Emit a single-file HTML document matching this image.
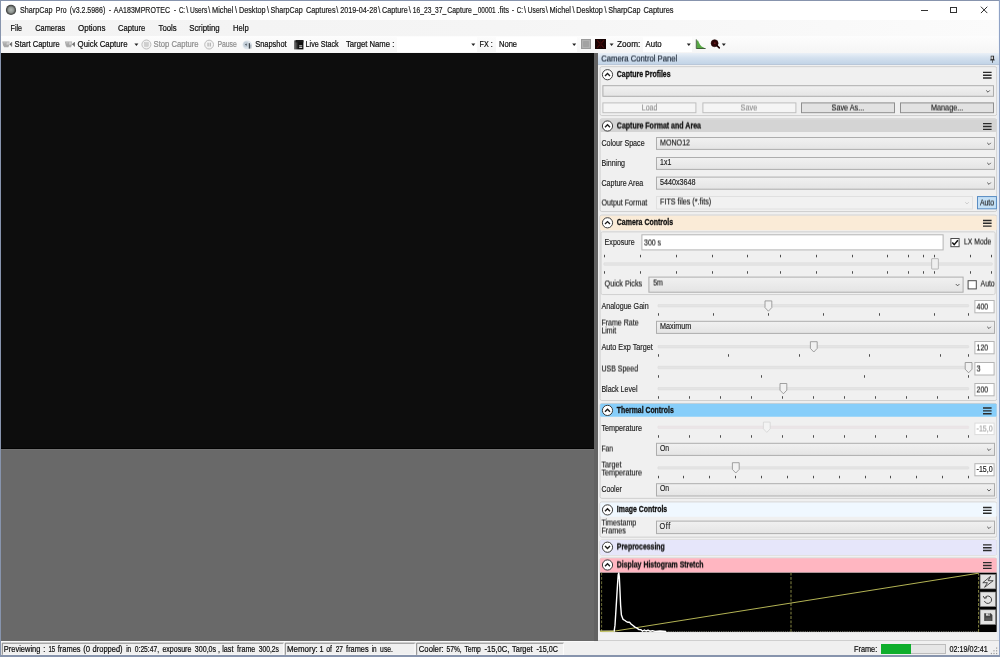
<!DOCTYPE html>
<html>
<head>
<meta charset="utf-8">
<title>SharpCap Pro</title>
<style>
*{box-sizing:border-box;margin:0;padding:0}
html,body{width:1000px;height:657px;overflow:hidden;background:#f0f0f0}
body{font-family:"Liberation Sans",sans-serif;position:relative}
.a{position:absolute}
.txt{will-change:transform;font-variant-ligatures:none}
.txt text{white-space:pre}
.half{transform:translateY(0.5px) rotate(0.0001deg);transform-origin:0 0}
</style>
</head>
<body>
<svg class="a" width="0" height="0" style="left:0;top:0"><defs><linearGradient id="cg" x1="0" y1="0" x2="0" y2="1"><stop offset="0" stop-color="#f1f1f1"/><stop offset="1" stop-color="#e4e4e4"/></linearGradient></defs></svg>
<div class="a" style="left:0.00px;top:0.00px;width:1000.00px;height:657.00px;background:#f0f0f0;"></div>
<div class="a" style="left:0.00px;top:0.00px;width:1000.00px;height:20.00px;background:#ffffff;"></div>
<div class="a" style="left:0.00px;top:20.00px;width:1000.00px;height:16.00px;background:linear-gradient(90deg,#f3f3f3,#f5f5f5 50%,#fbfbfb);"></div>
<div class="a" style="left:0.00px;top:36.00px;width:1000.00px;height:17.00px;background:linear-gradient(#fdfdfd,#f5f5f5);"></div>
<svg class="a" style="left:5px;top:4px" width="13" height="13"><defs><radialGradient id="ti" cx="50%" cy="50%" r="50%"><stop offset="0" stop-color="#b2b8b4"/><stop offset="0.55" stop-color="#8e9490"/><stop offset="0.82" stop-color="#565856"/><stop offset="1" stop-color="#3a3c3a"/></radialGradient></defs><circle cx="6" cy="5.9" r="5.1" fill="url(#ti)"/></svg>
<div class="a" style="left:920.80px;top:9.60px;width:7.20px;height:0.90px;background:#333;"></div>
<div class="a" style="left:950.20px;top:6.60px;width:7.20px;height:6.80px;border:0.9px solid #333;"></div>
<svg class="a" style="left:980px;top:6px" width="8" height="8"><g transform="translate(0.40,0.20)"><path d="M0.5 0.5L6.9 6.9M6.9 0.5L0.5 6.9" stroke="#2e2e2e" stroke-width="1.0" fill="none"/></g></svg>
<svg class="a" style="left:2px;top:40px" width="11" height="8"><g transform="translate(0.20,0.90)"><path d="M0.1 0.5H7.3L6.9 4.6L6.2 6.3H1.9L0.9 4.4Z" fill="#a9a9a9"/><rect x="4.3" y="1.3" width="2.4" height="2.5" fill="#d2d2d2"/><rect x="1.2" y="1.0" width="2.4" height="1.6" fill="#bdbdbd"/><path d="M7.1 3.3L9.1 1.7V5.1Z" fill="#606060"/><rect x="9.15" y="1.2" width="0.75" height="4.5" fill="#4a4a4a"/></g></svg>
<svg class="a" style="left:64px;top:40px" width="12" height="8"><g transform="translate(0.80,0.90)"><path d="M0.1 0.5H7.3L6.9 4.6L6.2 6.3H1.9L0.9 4.4Z" fill="#a9a9a9"/><rect x="4.3" y="1.3" width="2.4" height="2.5" fill="#d2d2d2"/><rect x="1.2" y="1.0" width="2.4" height="1.6" fill="#bdbdbd"/><path d="M7.1 3.3L9.1 1.7V5.1Z" fill="#606060"/><rect x="9.15" y="1.2" width="0.75" height="4.5" fill="#4a4a4a"/></g></svg>
<svg class="a" style="left:134px;top:43px" width="5" height="4"><g transform="translate(0.40,0.60)"><path d="M0 0H4L2 2.4Z" fill="#222"/></g></svg>
<svg class="a" style="left:141px;top:39px" width="11" height="11"><g transform="translate(0.20,0.30)"><circle cx="5.2" cy="5.2" r="4.5" fill="#f2f2f2" stroke="#b8b8b8" stroke-width="0.9"/><rect x="3.3" y="3.3" width="3.8" height="3.8" fill="#cfcfcf" stroke="#b9b9b9" stroke-width="0.4"/></g></svg>
<svg class="a" style="left:204px;top:39px" width="11" height="11"><g transform="translate(0.00,0.50)"><circle cx="5.1" cy="5.1" r="4.4" fill="#f4f4f4" stroke="#b4b4b4" stroke-width="0.9"/><rect x="3.5" y="3.2" width="1.1" height="3.8" fill="#aaa"/><rect x="5.7" y="3.2" width="1.1" height="3.8" fill="#aaa"/></g></svg>
<svg class="a" style="left:242px;top:40px" width="11" height="10"><g transform="translate(0.40,0.00)"><ellipse cx="4.8" cy="4.8" rx="4.7" ry="4.4" fill="#dde4ea"/><ellipse cx="3.6" cy="4.4" rx="2.6" ry="2.8" fill="#c3ced8"/><path d="M2.6 4.6L4.2 3.4V5.8Z" fill="#39434c"/><rect x="6.4" y="3.2" width="1.1" height="5.4" fill="#2f373e"/><rect x="8" y="4.6" width="0.9" height="4" fill="#8d98a2"/></g></svg>
<svg class="a" style="left:294px;top:40px" width="10" height="10"><defs><linearGradient id="ls" x1="0" x2="1" y1="0" y2="0"><stop offset="0" stop-color="#808080"/><stop offset="0.45" stop-color="#151515"/><stop offset="1" stop-color="#0a0a0a"/></linearGradient></defs><rect x="0" y="0.4" width="9.4" height="9" fill="url(#ls)"/><rect x="1.6" y="0" width="7.8" height="2.4" fill="#1b1b1b"/><rect x="5.2" y="5.4" width="3" height="0.9" fill="#f0f0f0"/><rect x="5.2" y="7.1" width="3" height="0.9" fill="#dcdcdc"/></svg>
<div class="a" style="left:396.60px;top:36.60px;width:80.20px;height:15.80px;background:#ffffff;"></div>
<svg class="a" style="left:471px;top:43px" width="5" height="4"><g transform="translate(0.30,0.60)"><path d="M0 0H4L2 2.4Z" fill="#222"/></g></svg>
<div class="a" style="left:495.60px;top:36.60px;width:81.60px;height:15.80px;background:#ffffff;"></div>
<svg class="a" style="left:572px;top:43px" width="5" height="4"><g transform="translate(0.20,0.60)"><path d="M0 0H4L2 2.4Z" fill="#222"/></g></svg>
<div class="a" style="left:581.00px;top:39.00px;width:10.00px;height:10.00px;background:#b1b1b1;border:0.8px solid #9a9a9a;"></div>
<div class="a" style="left:583.00px;top:41.00px;width:6.00px;height:6.00px;background:#a2a2a2;border-radius:1px;"></div>
<svg class="a" style="left:595px;top:39px" width="12" height="11"><rect width="11" height="10" fill="#150303"/><path d="M2 1.2L9 8.8M9 1.2L2 8.8" stroke="#4c0b0b" stroke-width="1.2"/><path d="M5.5 1V9M1 5H10" stroke="#2c0606" stroke-width="0.8"/></svg>
<svg class="a" style="left:609px;top:43px" width="5" height="4"><g transform="translate(0.60,0.60)"><path d="M0 0H4L2 2.4Z" fill="#222"/></g></svg>
<div class="a" style="left:642.60px;top:36.60px;width:49.60px;height:15.80px;background:#ffffff;"></div>
<svg class="a" style="left:686px;top:43px" width="5" height="4"><g transform="translate(0.80,0.60)"><path d="M0 0H4L2 2.4Z" fill="#222"/></g></svg>
<svg class="a" style="left:695px;top:39px" width="11" height="11"><g transform="translate(0.40,0.00)"><path d="M1.4 9.2V2.0L2.5 1.2L3.5 3.4L4.7 5.8L6.2 7.4L8.2 8.5L9.6 9.2Z" fill="#57a844"/><path d="M0.9 0.4V9.5H10.2" stroke="#2f4f28" stroke-width="0.9" fill="none"/></g></svg>
<svg class="a" style="left:710px;top:39px" width="11" height="10"><g transform="translate(0.60,0.20)"><circle cx="4" cy="4" r="3.5" fill="#2e0507" stroke="#1d0203" stroke-width="0.6"/><path d="M6.4 6.4L8.7 8.7" stroke="#1d0203" stroke-width="1.5" stroke-linecap="round"/><circle cx="4.2" cy="4" r="0.9" fill="#6a1c20"/></g></svg>
<svg class="a" style="left:721px;top:43px" width="5" height="4"><g transform="translate(0.80,0.60)"><path d="M0 0H4L2 2.4Z" fill="#222"/></g></svg>
<div class="a" style="left:1.00px;top:53.00px;width:593.40px;height:396.40px;background:#0d0d0d;"></div>
<div class="a" style="left:1.00px;top:449.40px;width:593.40px;height:191.40px;background:#696969;"></div>
<div class="a" style="left:1.00px;top:448.30px;width:593.40px;height:1.10px;background:#030303;"></div>
<div class="a" style="left:1.00px;top:449.40px;width:593.40px;height:1.00px;background:#727272;"></div>
<div class="a" style="left:594.20px;top:53.00px;width:3.40px;height:587.60px;background:#626262;"></div>
<div class="a" style="left:597.60px;top:53.00px;width:1.60px;height:587.60px;background:#e6e6e6;"></div>
<div class="a" style="left:597.80px;top:53.00px;width:401.20px;height:587.80px;background:#f0f0f0;"></div>
<div class="a" style="left:597.80px;top:53.00px;width:401.20px;height:11.40px;background:linear-gradient(#eaf0f7,#d3e0ee 45%,#c2d4e7);"></div>
<div class="a" style="left:597.80px;top:64.20px;width:401.20px;height:0.80px;background:#b9c7d9;"></div>
<svg class="a" style="left:989px;top:55px" width="6" height="9"><g transform="translate(0.90,0.80)"><rect x="1.2" y="0.3" width="2.6" height="3.6" fill="#fff" stroke="#222" stroke-width="0.7"/><rect x="2.9" y="0.3" width="0.9" height="3.6" fill="#222"/><rect x="0.2" y="3.8" width="4.6" height="0.8" fill="#222"/><rect x="2.15" y="4.4" width="0.7" height="2.6" fill="#222"/></g></svg>
<svg class="a" style="left:598px;top:65px" width="401" height="53"><g transform="translate(0.60,0.20)"><rect x="1.45" y="1.45" width="396.70" height="48.90" rx="1.8" fill="none" stroke="#cbcbcb" stroke-width="0.9"/></g></svg>
<svg class="a" style="left:601px;top:68px" width="13" height="13"><g transform="translate(0.50,0.70)"><circle cx="6" cy="6" r="5.1" fill="#fff" stroke="#333" stroke-width="0.95"/><path d="M-2.5 1.3L0 -1.2L2.5 1.3" transform="translate(6,6)" stroke="#1a1a1a" stroke-width="1.35" fill="none"/></g></svg>
<svg class="a" style="left:983px;top:71px" width="9" height="8"><g transform="translate(0.00,0.60)"><path d="M0 0.75H8.6M0 3.6H8.6M0 6.45H8.6" stroke="#2b2b2b" stroke-width="1.4" fill="none"/></g></svg>
<svg class="a" style="left:601px;top:84px" width="395" height="14"><g transform="translate(0.40,0.20)"><rect x="1.50" y="1.50" width="390.60" height="10.60" rx="0" fill="url(#cg)" stroke="#adadad" stroke-width="1.0"/></g></svg>
<svg class="a" style="left:985px;top:90px" width="6" height="3"><g transform="translate(0.80,0.00)"><path d="M0.4 0.4L2.2 2.2L4.0 0.4" stroke="#484848" stroke-width="0.9" fill="none"/></g></svg>
<svg class="a" style="left:601px;top:101px" width="97" height="14"><g transform="translate(0.40,0.40)"><rect x="1.50" y="1.50" width="93.00" height="9.80" rx="0" fill="#f5f5f5" stroke="#bebebe" stroke-width="1.0"/></g></svg>
<svg class="a" style="left:701px;top:101px" width="97" height="14"><g transform="translate(0.40,0.40)"><rect x="1.50" y="1.50" width="93.00" height="9.80" rx="0" fill="#f5f5f5" stroke="#bebebe" stroke-width="1.0"/></g></svg>
<svg class="a" style="left:800px;top:101px" width="97" height="14"><g transform="translate(0.00,0.40)"><rect x="1.50" y="1.50" width="93.00" height="9.80" rx="0" fill="#e2e2e2" stroke="#8f8f8f" stroke-width="1.0"/></g></svg>
<svg class="a" style="left:899px;top:101px" width="97" height="14"><g transform="translate(0.00,0.40)"><rect x="1.50" y="1.50" width="93.00" height="9.80" rx="0" fill="#e2e2e2" stroke="#8f8f8f" stroke-width="1.0"/></g></svg>
<svg class="a" style="left:598px;top:117px" width="401" height="97"><g transform="translate(0.60,0.40)"><rect x="1.45" y="1.45" width="396.70" height="92.70" rx="1.8" fill="none" stroke="#cbcbcb" stroke-width="0.9"/></g></svg>
<svg class="a" style="left:600px;top:119px" width="397" height="14"><g transform="translate(0.20,0.20)"><rect x="0" y="0" width="396.4" height="12.8" rx="1.2" fill="#d4d4d4"/></g></svg>
<svg class="a" style="left:601px;top:120px" width="13" height="13"><g transform="translate(0.50,0.00)"><circle cx="6" cy="6" r="5.1" fill="#fff" stroke="#333" stroke-width="0.95"/><path d="M-2.5 1.3L0 -1.2L2.5 1.3" transform="translate(6,6)" stroke="#1a1a1a" stroke-width="1.35" fill="none"/></g></svg>
<svg class="a" style="left:983px;top:122px" width="9" height="9"><g transform="translate(0.00,0.90)"><path d="M0 0.75H8.6M0 3.6H8.6M0 6.45H8.6" stroke="#2b2b2b" stroke-width="1.4" fill="none"/></g></svg>
<svg class="a" style="left:655px;top:136px" width="342" height="15"><rect x="1.50" y="1.50" width="338.00" height="11.90" rx="0" fill="url(#cg)" stroke="#adadad" stroke-width="1.0"/></svg>
<svg class="a" style="left:986px;top:142px" width="6" height="4"><g transform="translate(0.80,0.45)"><path d="M0.4 0.4L2.2 2.2L4.0 0.4" stroke="#484848" stroke-width="0.9" fill="none"/></g></svg>
<svg class="a" style="left:655px;top:156px" width="342" height="15"><rect x="1.50" y="1.50" width="338.00" height="11.90" rx="0" fill="url(#cg)" stroke="#adadad" stroke-width="1.0"/></svg>
<svg class="a" style="left:986px;top:162px" width="6" height="4"><g transform="translate(0.80,0.45)"><path d="M0.4 0.4L2.2 2.2L4.0 0.4" stroke="#484848" stroke-width="0.9" fill="none"/></g></svg>
<svg class="a" style="left:655px;top:175px" width="342" height="16"><g transform="translate(0.00,0.60)"><rect x="1.50" y="1.50" width="338.00" height="12.10" rx="0" fill="url(#cg)" stroke="#adadad" stroke-width="1.0"/></g></svg>
<svg class="a" style="left:986px;top:182px" width="6" height="3"><g transform="translate(0.80,0.15)"><path d="M0.4 0.4L2.2 2.2L4.0 0.4" stroke="#484848" stroke-width="0.9" fill="none"/></g></svg>
<svg class="a" style="left:655px;top:195px" width="320" height="16"><rect x="1.50" y="1.50" width="316.00" height="12.50" rx="0" fill="#f1f1f1" stroke="#e0e0e0" stroke-width="1.0"/></svg>
<svg class="a" style="left:964px;top:201px" width="6" height="4"><g transform="translate(0.80,0.75)"><path d="M0.4 0.4L2.2 2.2L4.0 0.4" stroke="#c8c8c8" stroke-width="0.9" fill="none"/></g></svg>
<svg class="a" style="left:976px;top:195px" width="22" height="16"><g transform="translate(0.00,0.10)"><rect x="1.48" y="1.48" width="18.95" height="12.25" rx="0" fill="#c4e0f6" stroke="#5288c0" stroke-width="0.95"/></g></svg>
<svg class="a" style="left:598px;top:213px" width="401" height="190"><g transform="translate(0.60,0.60)"><rect x="1.45" y="1.45" width="396.70" height="185.50" rx="1.8" fill="none" stroke="#cbcbcb" stroke-width="0.9"/></g></svg>
<svg class="a" style="left:600px;top:215px" width="397" height="16"><g transform="translate(0.20,0.80)"><rect x="0" y="0" width="396.4" height="14.4" rx="1.2" fill="#faebd7"/></g></svg>
<svg class="a" style="left:601px;top:216px" width="13" height="13"><g transform="translate(0.50,0.80)"><circle cx="6" cy="6" r="5.1" fill="#fff" stroke="#333" stroke-width="0.95"/><path d="M-2.5 1.3L0 -1.2L2.5 1.3" transform="translate(6,6)" stroke="#1a1a1a" stroke-width="1.35" fill="none"/></g></svg>
<svg class="a" style="left:983px;top:219px" width="9" height="8"><g transform="translate(0.00,0.70)"><path d="M0 0.75H8.6M0 3.6H8.6M0 6.45H8.6" stroke="#2b2b2b" stroke-width="1.4" fill="none"/></g></svg>
<svg class="a" style="left:599px;top:230px" width="398" height="67"><g transform="translate(0.60,0.40)"><rect x="1.45" y="1.45" width="394.10" height="62.70" rx="1.6" fill="none" stroke="#cdcdcd" stroke-width="0.9"/></g></svg>
<svg class="a" style="left:640px;top:233px" width="305" height="19"><g transform="translate(0.40,0.30)"><rect x="1.50" y="1.50" width="301.20" height="15.10" rx="0" fill="#ffffff" stroke="#b4b4b4" stroke-width="1.0"/></g></svg>
<svg class="a" style="left:949px;top:237px" width="12" height="12"><g transform="translate(0.40,0.00)"><rect x="1.50" y="1.50" width="8.20" height="8.20" rx="0" fill="#ffffff" stroke="#4a4a4a" stroke-width="1.0"/></g></svg>
<svg class="a" style="left:951px;top:239px" width="8" height="8"><g transform="translate(0.40,0.40)"><path d="M0.9 3.1L2.8 5.3L6.5 0.8" stroke="#111" stroke-width="1.5" fill="none"/></g></svg>
<svg class="a" style="left:603px;top:254px" width="393" height="4"><g transform="translate(0.00,0.80)"><rect x="1" y="0" width="1" height="2.5" fill="#4c4c4c"/><rect x="37" y="0" width="1" height="2.5" fill="#4c4c4c"/><rect x="73" y="0" width="1" height="2.5" fill="#4c4c4c"/><rect x="109" y="0" width="1" height="2.5" fill="#4c4c4c"/><rect x="144" y="0" width="1" height="2.5" fill="#4c4c4c"/><rect x="177" y="0" width="1" height="2.5" fill="#4c4c4c"/><rect x="213" y="0" width="1" height="2.5" fill="#4c4c4c"/><rect x="249" y="0" width="1" height="2.5" fill="#4c4c4c"/><rect x="284" y="0" width="1" height="2.5" fill="#4c4c4c"/><rect x="305" y="0" width="1" height="2.5" fill="#4c4c4c"/><rect x="320" y="0" width="1" height="2.5" fill="#4c4c4c"/><rect x="331" y="0" width="1" height="2.5" fill="#4c4c4c"/><rect x="367" y="0" width="1" height="2.5" fill="#4c4c4c"/><rect x="388" y="0" width="1" height="2.5" fill="#4c4c4c"/></g></svg>
<svg class="a" style="left:602px;top:261px" width="392" height="6"><g transform="translate(0.60,0.40)"><rect x="1.30" y="1.30" width="388.40" height="2.60" rx="0.6" fill="#e4e4e4" stroke="#dcdcdc" stroke-width="0.6"/></g></svg>
<svg class="a" style="left:930px;top:257px" width="10" height="14"><g transform="translate(0.20,0.20)"><rect x="1.45" y="1.45" width="6.70" height="10.40" rx="0.3" fill="#efefef" stroke="#b2b2b2" stroke-width="0.9"/></g></svg>
<svg class="a" style="left:603px;top:271px" width="393" height="3"><g transform="translate(0.00,0.20)"><rect x="1" y="0" width="1" height="2.5" fill="#4c4c4c"/><rect x="37" y="0" width="1" height="2.5" fill="#4c4c4c"/><rect x="73" y="0" width="1" height="2.5" fill="#4c4c4c"/><rect x="109" y="0" width="1" height="2.5" fill="#4c4c4c"/><rect x="144" y="0" width="1" height="2.5" fill="#4c4c4c"/><rect x="177" y="0" width="1" height="2.5" fill="#4c4c4c"/><rect x="213" y="0" width="1" height="2.5" fill="#4c4c4c"/><rect x="249" y="0" width="1" height="2.5" fill="#4c4c4c"/><rect x="284" y="0" width="1" height="2.5" fill="#4c4c4c"/><rect x="305" y="0" width="1" height="2.5" fill="#4c4c4c"/><rect x="320" y="0" width="1" height="2.5" fill="#4c4c4c"/><rect x="331" y="0" width="1" height="2.5" fill="#4c4c4c"/><rect x="367" y="0" width="1" height="2.5" fill="#4c4c4c"/><rect x="388" y="0" width="1" height="2.5" fill="#4c4c4c"/></g></svg>
<svg class="a" style="left:647px;top:275px" width="318" height="19"><g transform="translate(0.40,0.60)"><rect x="1.50" y="1.50" width="314.20" height="15.10" rx="0" fill="url(#cg)" stroke="#adadad" stroke-width="1.0"/></g></svg>
<svg class="a" style="left:955px;top:283px" width="5" height="4"><g transform="translate(0.40,0.65)"><path d="M0.4 0.4L2.2 2.2L4.0 0.4" stroke="#484848" stroke-width="0.9" fill="none"/></g></svg>
<svg class="a" style="left:966px;top:279px" width="12" height="12"><g transform="translate(0.60,0.20)"><rect x="1.50" y="1.50" width="8.20" height="8.20" rx="0" fill="#ffffff" stroke="#4a4a4a" stroke-width="1.0"/></g></svg>
<svg class="a" style="left:656px;top:303px" width="315" height="6"><g transform="translate(0.60,0.20)"><rect x="1.30" y="1.30" width="310.80" height="2.40" rx="0.6" fill="#e4e4e4" stroke="#dcdcdc" stroke-width="0.6"/></g></svg>
<svg class="a" style="left:764px;top:300px" width="9" height="12"><g transform="translate(0.40,0.40)"><path d="M0.6 0.5H7.4V7.2L4 10.8L0.6 7.2Z" fill="#f1f1f1" stroke="#8c8c8c" stroke-width="0.8"/></g></svg>
<svg class="a" style="left:656px;top:313px" width="317" height="3"><g transform="translate(0.00,0.20)"><rect x="2" y="0" width="1" height="2.5" fill="#4c4c4c"/><rect x="57" y="0" width="1" height="2.5" fill="#4c4c4c"/><rect x="112" y="0" width="1" height="2.5" fill="#4c4c4c"/><rect x="167" y="0" width="1" height="2.5" fill="#4c4c4c"/><rect x="223" y="0" width="1" height="2.5" fill="#4c4c4c"/><rect x="278" y="0" width="1" height="2.5" fill="#4c4c4c"/><rect x="312" y="0" width="1" height="2.5" fill="#4c4c4c"/></g></svg>
<svg class="a" style="left:973px;top:299px" width="23" height="16"><g transform="translate(0.40,0.00)"><rect x="1.50" y="1.50" width="19.20" height="12.30" rx="0" fill="#ffffff" stroke="#b4b4b4" stroke-width="1.0"/></g></svg>
<svg class="a" style="left:655px;top:319px" width="342" height="16"><g transform="translate(0.00,0.80)"><rect x="1.50" y="1.50" width="338.00" height="12.10" rx="0" fill="url(#cg)" stroke="#adadad" stroke-width="1.0"/></g></svg>
<svg class="a" style="left:986px;top:326px" width="6" height="4"><g transform="translate(0.80,0.35)"><path d="M0.4 0.4L2.2 2.2L4.0 0.4" stroke="#484848" stroke-width="0.9" fill="none"/></g></svg>
<svg class="a" style="left:656px;top:344px" width="315" height="6"><g transform="translate(0.60,0.20)"><rect x="1.30" y="1.30" width="310.80" height="2.40" rx="0.6" fill="#e4e4e4" stroke="#dcdcdc" stroke-width="0.6"/></g></svg>
<svg class="a" style="left:809px;top:341px" width="9" height="12"><g transform="translate(0.80,0.20)"><path d="M0.6 0.5H7.4V7.2L4 10.8L0.6 7.2Z" fill="#f1f1f1" stroke="#8c8c8c" stroke-width="0.8"/></g></svg>
<svg class="a" style="left:656px;top:354px" width="317" height="3"><g transform="translate(0.00,0.20)"><rect x="2" y="0" width="1" height="2.5" fill="#4c4c4c"/><rect x="72" y="0" width="1" height="2.5" fill="#4c4c4c"/><rect x="143" y="0" width="1" height="2.5" fill="#4c4c4c"/><rect x="213" y="0" width="1" height="2.5" fill="#4c4c4c"/><rect x="284" y="0" width="1" height="2.5" fill="#4c4c4c"/><rect x="312" y="0" width="1" height="2.5" fill="#4c4c4c"/></g></svg>
<svg class="a" style="left:973px;top:340px" width="23" height="16"><g transform="translate(0.40,0.00)"><rect x="1.50" y="1.50" width="19.20" height="12.30" rx="0" fill="#ffffff" stroke="#b4b4b4" stroke-width="1.0"/></g></svg>
<svg class="a" style="left:656px;top:365px" width="315" height="6"><g transform="translate(0.60,0.00)"><rect x="1.30" y="1.30" width="310.80" height="2.40" rx="0.6" fill="#e4e4e4" stroke="#dcdcdc" stroke-width="0.6"/></g></svg>
<svg class="a" style="left:964px;top:362px" width="9" height="12"><g transform="translate(0.60,0.00)"><path d="M0.6 0.5H7.4V7.2L4 10.8L0.6 7.2Z" fill="#f1f1f1" stroke="#8c8c8c" stroke-width="0.8"/></g></svg>
<svg class="a" style="left:656px;top:375px" width="317" height="3"><g transform="translate(0.00,0.20)"><rect x="2" y="0" width="1" height="2.5" fill="#4c4c4c"/><rect x="105" y="0" width="1" height="2.5" fill="#4c4c4c"/><rect x="208" y="0" width="1" height="2.5" fill="#4c4c4c"/><rect x="312" y="0" width="1" height="2.5" fill="#4c4c4c"/></g></svg>
<svg class="a" style="left:973px;top:361px" width="23" height="16"><g transform="translate(0.40,0.00)"><rect x="1.50" y="1.50" width="19.20" height="12.50" rx="0" fill="#ffffff" stroke="#b4b4b4" stroke-width="1.0"/></g></svg>
<svg class="a" style="left:656px;top:386px" width="315" height="6"><g transform="translate(0.60,0.20)"><rect x="1.30" y="1.30" width="310.80" height="2.40" rx="0.6" fill="#e4e4e4" stroke="#dcdcdc" stroke-width="0.6"/></g></svg>
<svg class="a" style="left:779px;top:383px" width="9" height="12"><g transform="translate(0.40,0.00)"><path d="M0.6 0.5H7.4V7.2L4 10.8L0.6 7.2Z" fill="#f1f1f1" stroke="#8c8c8c" stroke-width="0.8"/></g></svg>
<svg class="a" style="left:656px;top:396px" width="317" height="3"><g transform="translate(0.00,0.20)"><rect x="2" y="0" width="1" height="2.5" fill="#4c4c4c"/><rect x="33" y="0" width="1" height="2.5" fill="#4c4c4c"/><rect x="64" y="0" width="1" height="2.5" fill="#4c4c4c"/><rect x="95" y="0" width="1" height="2.5" fill="#4c4c4c"/><rect x="126" y="0" width="1" height="2.5" fill="#4c4c4c"/><rect x="157" y="0" width="1" height="2.5" fill="#4c4c4c"/><rect x="188" y="0" width="1" height="2.5" fill="#4c4c4c"/><rect x="219" y="0" width="1" height="2.5" fill="#4c4c4c"/><rect x="250" y="0" width="1" height="2.5" fill="#4c4c4c"/><rect x="281" y="0" width="1" height="2.5" fill="#4c4c4c"/><rect x="312" y="0" width="1" height="2.5" fill="#4c4c4c"/></g></svg>
<svg class="a" style="left:973px;top:382px" width="23" height="16"><g transform="translate(0.40,0.00)"><rect x="1.50" y="1.50" width="19.20" height="12.30" rx="0" fill="#ffffff" stroke="#b4b4b4" stroke-width="1.0"/></g></svg>
<svg class="a" style="left:598px;top:402px" width="401" height="98"><g transform="translate(0.60,0.00)"><rect x="1.45" y="1.45" width="396.70" height="94.90" rx="1.8" fill="none" stroke="#cbcbcb" stroke-width="0.9"/></g></svg>
<svg class="a" style="left:600px;top:403px" width="397" height="14"><g transform="translate(0.20,0.80)"><rect x="0" y="0" width="396.4" height="12.9" rx="1.2" fill="#87cefa"/></g></svg>
<svg class="a" style="left:601px;top:404px" width="13" height="13"><g transform="translate(0.50,0.40)"><circle cx="6" cy="6" r="5.1" fill="#fff" stroke="#333" stroke-width="0.95"/><path d="M-2.5 1.3L0 -1.2L2.5 1.3" transform="translate(6,6)" stroke="#1a1a1a" stroke-width="1.35" fill="none"/></g></svg>
<svg class="a" style="left:983px;top:407px" width="9" height="8"><g transform="translate(0.00,0.30)"><path d="M0 0.75H8.6M0 3.6H8.6M0 6.45H8.6" stroke="#2b2b2b" stroke-width="1.4" fill="none"/></g></svg>
<svg class="a" style="left:656px;top:424px" width="315" height="6"><g transform="translate(0.60,0.80)"><rect x="1.30" y="1.30" width="310.80" height="2.40" rx="0.6" fill="#ebe5e7" stroke="#e8e1e4" stroke-width="0.6"/></g></svg>
<svg class="a" style="left:762px;top:421px" width="9" height="13"><g transform="translate(0.80,0.60)"><path d="M0.6 0.5H7.4V7.2L4 10.8L0.6 7.2Z" fill="#f3f3f3" stroke="#d4d4d4" stroke-width="0.8"/></g></svg>
<svg class="a" style="left:656px;top:435px" width="317" height="3"><g transform="translate(0.00,0.20)"><rect x="2" y="0" width="1" height="2.5" fill="#4c4c4c"/><rect x="33" y="0" width="1" height="2.5" fill="#4c4c4c"/><rect x="64" y="0" width="1" height="2.5" fill="#4c4c4c"/><rect x="95" y="0" width="1" height="2.5" fill="#4c4c4c"/><rect x="126" y="0" width="1" height="2.5" fill="#4c4c4c"/><rect x="157" y="0" width="1" height="2.5" fill="#4c4c4c"/><rect x="188" y="0" width="1" height="2.5" fill="#4c4c4c"/><rect x="219" y="0" width="1" height="2.5" fill="#4c4c4c"/><rect x="250" y="0" width="1" height="2.5" fill="#4c4c4c"/><rect x="281" y="0" width="1" height="2.5" fill="#4c4c4c"/><rect x="312" y="0" width="1" height="2.5" fill="#4c4c4c"/></g></svg>
<svg class="a" style="left:973px;top:421px" width="23" height="16"><g transform="translate(0.40,0.60)"><rect x="1.50" y="1.50" width="19.20" height="11.50" rx="0" fill="#ffffff" stroke="#dcdcdc" stroke-width="1.0"/></g></svg>
<svg class="a" style="left:655px;top:441px" width="342" height="16"><g transform="translate(0.00,0.80)"><rect x="1.50" y="1.50" width="338.00" height="12.10" rx="0" fill="url(#cg)" stroke="#adadad" stroke-width="1.0"/></g></svg>
<svg class="a" style="left:986px;top:448px" width="6" height="4"><g transform="translate(0.80,0.35)"><path d="M0.4 0.4L2.2 2.2L4.0 0.4" stroke="#484848" stroke-width="0.9" fill="none"/></g></svg>
<svg class="a" style="left:656px;top:465px" width="315" height="6"><g transform="translate(0.60,0.40)"><rect x="1.30" y="1.30" width="310.80" height="2.40" rx="0.6" fill="#e4e4e4" stroke="#dcdcdc" stroke-width="0.6"/></g></svg>
<svg class="a" style="left:731px;top:462px" width="9" height="12"><g transform="translate(0.80,0.20)"><path d="M0.6 0.5H7.4V7.2L4 10.8L0.6 7.2Z" fill="#f1f1f1" stroke="#8c8c8c" stroke-width="0.8"/></g></svg>
<svg class="a" style="left:656px;top:475px" width="317" height="4"><g transform="translate(0.00,0.80)"><rect x="2" y="0" width="1" height="2.5" fill="#4c4c4c"/><rect x="27" y="0" width="1" height="2.5" fill="#4c4c4c"/><rect x="53" y="0" width="1" height="2.5" fill="#4c4c4c"/><rect x="79" y="0" width="1" height="2.5" fill="#4c4c4c"/><rect x="105" y="0" width="1" height="2.5" fill="#4c4c4c"/><rect x="131" y="0" width="1" height="2.5" fill="#4c4c4c"/><rect x="157" y="0" width="1" height="2.5" fill="#4c4c4c"/><rect x="183" y="0" width="1" height="2.5" fill="#4c4c4c"/><rect x="209" y="0" width="1" height="2.5" fill="#4c4c4c"/><rect x="234" y="0" width="1" height="2.5" fill="#4c4c4c"/><rect x="260" y="0" width="1" height="2.5" fill="#4c4c4c"/><rect x="286" y="0" width="1" height="2.5" fill="#4c4c4c"/><rect x="312" y="0" width="1" height="2.5" fill="#4c4c4c"/></g></svg>
<svg class="a" style="left:973px;top:462px" width="23" height="16"><g transform="translate(0.40,0.20)"><rect x="1.50" y="1.50" width="19.20" height="12.10" rx="0" fill="#ffffff" stroke="#b4b4b4" stroke-width="1.0"/></g></svg>
<svg class="a" style="left:655px;top:482px" width="342" height="16"><g transform="translate(0.00,0.20)"><rect x="1.50" y="1.50" width="338.00" height="12.30" rx="0" fill="url(#cg)" stroke="#adadad" stroke-width="1.0"/></g></svg>
<svg class="a" style="left:986px;top:488px" width="6" height="4"><g transform="translate(0.80,0.85)"><path d="M0.4 0.4L2.2 2.2L4.0 0.4" stroke="#484848" stroke-width="0.9" fill="none"/></g></svg>
<svg class="a" style="left:598px;top:500px" width="401" height="39"><g transform="translate(0.60,0.60)"><rect x="1.45" y="1.45" width="396.70" height="35.10" rx="1.8" fill="none" stroke="#cbcbcb" stroke-width="0.9"/></g></svg>
<svg class="a" style="left:600px;top:502px" width="397" height="15"><g transform="translate(0.20,0.60)"><rect x="0" y="0" width="396.4" height="14.2" rx="1.2" fill="#f0f8ff"/></g></svg>
<svg class="a" style="left:601px;top:503px" width="13" height="13"><g transform="translate(0.50,0.90)"><circle cx="6" cy="6" r="5.1" fill="#fff" stroke="#333" stroke-width="0.95"/><path d="M-2.5 1.3L0 -1.2L2.5 1.3" transform="translate(6,6)" stroke="#1a1a1a" stroke-width="1.35" fill="none"/></g></svg>
<svg class="a" style="left:983px;top:506px" width="9" height="9"><g transform="translate(0.00,0.80)"><path d="M0 0.75H8.6M0 3.6H8.6M0 6.45H8.6" stroke="#2b2b2b" stroke-width="1.4" fill="none"/></g></svg>
<svg class="a" style="left:655px;top:519px" width="342" height="17"><g transform="translate(0.00,0.60)"><rect x="1.50" y="1.50" width="338.00" height="12.50" rx="0" fill="url(#cg)" stroke="#adadad" stroke-width="1.0"/></g></svg>
<svg class="a" style="left:986px;top:526px" width="6" height="4"><g transform="translate(0.80,0.35)"><path d="M0.4 0.4L2.2 2.2L4.0 0.4" stroke="#484848" stroke-width="0.9" fill="none"/></g></svg>
<svg class="a" style="left:598px;top:538px" width="401" height="19"><g transform="translate(0.60,0.60)"><rect x="1.45" y="1.45" width="396.70" height="14.90" rx="1.8" fill="none" stroke="#cbcbcb" stroke-width="0.9"/></g></svg>
<svg class="a" style="left:600px;top:540px" width="397" height="16"><g transform="translate(0.20,0.10)"><rect x="0" y="0" width="396.4" height="14.9" rx="1.2" fill="#e6e6fa"/></g></svg>
<svg class="a" style="left:601px;top:541px" width="13" height="13"><g transform="translate(0.50,0.20)"><circle cx="6" cy="6" r="5.1" fill="#fff" stroke="#333" stroke-width="0.95"/><path d="M-2.5 -1.1L0 1.4L2.5 -1.1" transform="translate(6,6)" stroke="#1a1a1a" stroke-width="1.35" fill="none"/></g></svg>
<svg class="a" style="left:983px;top:544px" width="9" height="8"><g transform="translate(0.00,0.10)"><path d="M0 0.75H8.6M0 3.6H8.6M0 6.45H8.6" stroke="#2b2b2b" stroke-width="1.4" fill="none"/></g></svg>
<svg class="a" style="left:598px;top:556px" width="401" height="78"><g transform="translate(0.60,0.60)"><rect x="1.45" y="1.45" width="396.70" height="73.70" rx="1.8" fill="none" stroke="#cbcbcb" stroke-width="0.9"/></g></svg>
<svg class="a" style="left:600px;top:558px" width="397" height="15"><g transform="translate(0.20,0.20)"><rect x="0" y="0" width="396.4" height="14.4" rx="1.2" fill="#ffb6c1"/></g></svg>
<svg class="a" style="left:601px;top:559px" width="13" height="13"><g transform="translate(0.50,0.00)"><circle cx="6" cy="6" r="5.1" fill="#fff" stroke="#333" stroke-width="0.95"/><path d="M-2.5 1.3L0 -1.2L2.5 1.3" transform="translate(6,6)" stroke="#1a1a1a" stroke-width="1.35" fill="none"/></g></svg>
<svg class="a" style="left:983px;top:561px" width="9" height="9"><g transform="translate(0.00,0.90)"><path d="M0 0.75H8.6M0 3.6H8.6M0 6.45H8.6" stroke="#2b2b2b" stroke-width="1.4" fill="none"/></g></svg>
<svg class="a" style="left:599px;top:571px" width="399" height="63"><g transform="translate(0.00,0.70)"><rect x="1.00" y="1.00" width="396.60" height="59.30" rx="0" fill="#000000" stroke="none" stroke-width="0"/></g></svg>
<svg class="a" style="left:600px;top:572px" width="397" height="61"><g transform="translate(0.00,0.70)"><g transform="scale(1,1.0085)">
<path d="M1.6 0V58.8" stroke="#6c6c38" stroke-width="1.0" stroke-dasharray="2.8 1.5" fill="none"/><path d="M191 0V58.8M378.6 0V58.8" stroke="#858542" stroke-width="1.0" stroke-dasharray="2.8 1.5" fill="none"/>
<path d="M44 58.3H378" stroke="#9a9a90" stroke-width="0.6" stroke-dasharray="1.4 0.8" fill="none"/>
<path d="M0 58.2L14 58L378 0.6" stroke="#bcbc58" stroke-width="0.95" fill="none"/>
<path d="M0 58.2L14.2 58L15 52L16.2 33L17.5 12L18.2 2L18.8 0.4L19.3 4L19.8 14L20.6 32L21.4 42L23 46.2L25 47.4L26.5 48.6L28 49.2L29.5 49L31 50.8L33 52.4L35 54L37 55L39 56.4L41 56.6L42.5 58L44.5 56.8L46 57.8L48 57L50 58L52.5 57.4L55 58.2L60 57.8L66 58.3" stroke="#ffffff" stroke-width="1.4" fill="none" stroke-linejoin="round"/>
<path d="M0 58.2L14 58" stroke="#bcbc58" stroke-width="1.1" fill="none"/>
</g></g></svg>
<svg class="a" style="left:978px;top:573px" width="20" height="18"><g transform="translate(0.80,0.00)"><rect x="1.30" y="1.30" width="15.60" height="14.60" rx="0" fill="#e3e3e3" stroke="#6e6e6e" stroke-width="0.6"/></g></svg>
<svg class="a" style="left:978px;top:590px" width="20" height="19"><g transform="translate(0.80,0.70)"><rect x="1.30" y="1.30" width="15.60" height="14.70" rx="0" fill="#e3e3e3" stroke="#6e6e6e" stroke-width="0.6"/></g></svg>
<svg class="a" style="left:978px;top:608px" width="20" height="18"><g transform="translate(0.80,0.50)"><rect x="1.30" y="1.30" width="15.60" height="14.80" rx="0" fill="#e3e3e3" stroke="#6e6e6e" stroke-width="0.6"/></g></svg>
<svg class="a" style="left:981px;top:575px" width="15" height="15"><path d="M9.6 1.3L1.8 7.7H6.4L3.6 12.3L12.2 5.7H7.2Z" stroke="#333" stroke-width="0.85" fill="none" stroke-linejoin="miter"/></svg>
<svg class="a" style="left:982px;top:593px" width="13" height="13"><g transform="translate(0.00,0.40)"><path d="M2.6 4.6A3.7 3.7 0 1 1 2.4 7.6" stroke="#333" stroke-width="0.9" fill="none"/><path d="M1.2 2.6L2.5 5.0L5.0 4.2" stroke="#333" stroke-width="0.85" fill="none"/></g></svg>
<svg class="a" style="left:984px;top:613px" width="10" height="10"><path d="M0.2 0.3H6.8L8.4 1.9V8H0.2Z" fill="#444"/><rect x="2" y="0.3" width="4" height="2.4" fill="#d8d8d8"/><rect x="4.5" y="0.6" width="1" height="1.7" fill="#444"/><rect x="1.4" y="4.6" width="5.8" height="3.4" fill="#5a5a5a"/></svg>
<div class="a" style="left:996.90px;top:65.00px;width:1.70px;height:575.20px;background:#e6ecf6;"></div>
<div class="a" style="left:0.00px;top:640.60px;width:1000.00px;height:16.40px;background:#f0f0f0;"></div>
<div class="a" style="left:597.80px;top:640.20px;width:402.00px;height:0.90px;background:#cfcfcf;"></div>
<div class="a" style="left:1.00px;top:640.70px;width:593.00px;height:1.60px;background:#fafafa;"></div>
<svg class="a" style="left:1px;top:642px" width="283" height="14"><g transform="translate(0.80,0.00)"><path d="M0.5 13V1.2H282.0" stroke="#858585" stroke-width="1" fill="none"/><path d="M0.4 13.1H281.6V1.2" stroke="#ffffff" stroke-width="0.8" fill="none"/></g></svg>
<svg class="a" style="left:284px;top:642px" width="132" height="14"><g transform="translate(0.80,0.00)"><path d="M0.5 13V1.2H130.6" stroke="#858585" stroke-width="1" fill="none"/><path d="M0.4 13.1H130.2V1.2" stroke="#ffffff" stroke-width="0.8" fill="none"/></g></svg>
<svg class="a" style="left:416px;top:642px" width="148" height="14"><g transform="translate(0.20,0.00)"><path d="M0.5 13V1.2H147.6" stroke="#858585" stroke-width="1" fill="none"/><path d="M0.4 13.1H147.2V1.2" stroke="#ffffff" stroke-width="0.8" fill="none"/></g></svg>
<div class="a" style="left:880.60px;top:643.60px;width:65.40px;height:10.60px;background:#e6e6e6;border:1px solid #bcbcbc;"></div>
<div class="a" style="left:881.20px;top:644.20px;width:29.40px;height:9.40px;background:#0fae2c;"></div>
<svg class="a" style="left:990px;top:647px" width="9" height="9"><g fill="#9a9a9a"><rect x="6" y="0.5" width="1.2" height="1.2"/><rect x="3.4" y="3.2" width="1.2" height="1.2"/><rect x="6" y="3.2" width="1.2" height="1.2"/><rect x="0.8" y="5.9" width="1.2" height="1.2"/><rect x="3.4" y="5.9" width="1.2" height="1.2"/><rect x="6" y="5.9" width="1.2" height="1.2"/></g></svg>
<div class="a" style="left:0.00px;top:0.00px;width:1000.00px;height:1.00px;background:#8794ad;"></div>
<div class="a" style="left:0.00px;top:0.00px;width:1.00px;height:657.00px;background:#8794ad;"></div>
<div class="a" style="left:997.60px;top:1.00px;width:1.00px;height:52.00px;background:#f2f5fa;"></div>
<div class="a" style="left:998.60px;top:0.00px;width:1.40px;height:657.00px;background:#90a3c6;"></div>
<div class="a" style="left:0.00px;top:655.40px;width:1000.00px;height:1.60px;background:#8794ad;"></div>
<svg class="a txt" style="left:0;top:0" width="1000" height="657" font-family="Liberation Sans, sans-serif" font-variant-ligatures="none">
<text transform="translate(20.00,13) scale(0.8690,1)" font-size="8.3" fill="#222222" stroke="#222222" stroke-width="0.2">SharpCap</text>
<text transform="translate(55.80,13) scale(0.8273,1)" font-size="8.3" fill="#222222" stroke="#222222" stroke-width="0.2">Pro</text>
<text transform="translate(69.80,13) scale(0.8458,1)" font-size="8.3" fill="#222222" stroke="#222222" stroke-width="0.2">(v3.2.5986)</text>
<text transform="translate(108.73,13) scale(0.8800,1)" font-size="8.3" fill="#222222" stroke="#222222" stroke-width="0.2">-</text>
<text transform="translate(113.70,13) scale(0.8478,1)" font-size="8.3" fill="#222222" stroke="#222222" stroke-width="0.2">AA183MPROTEC</text>
<text transform="translate(173.78,13) scale(0.8800,1)" font-size="8.3" fill="#222222" stroke="#222222" stroke-width="0.2">-</text>
<text transform="translate(178.94,13) scale(0.7400,1)" font-size="8.3" fill="#222222" stroke="#222222" stroke-width="0.2">C:</text>
<text transform="translate(186.28,13) scale(0.8800,1)" font-size="8.3" fill="#222222" stroke="#222222" stroke-width="0.2">\</text>
<text transform="translate(190.00,13) scale(0.7994,1)" font-size="8.3" fill="#222222" stroke="#222222" stroke-width="0.2">Users</text>
<text transform="translate(208.18,13) scale(0.8800,1)" font-size="8.3" fill="#222222" stroke="#222222" stroke-width="0.2">\</text>
<text transform="translate(212.00,13) scale(0.8909,1)" font-size="8.3" fill="#222222" stroke="#222222" stroke-width="0.2">Michel</text>
<text transform="translate(234.93,13) scale(0.8800,1)" font-size="8.3" fill="#222222" stroke="#222222" stroke-width="0.2">\</text>
<text transform="translate(239.00,13) scale(0.8695,1)" font-size="8.3" fill="#222222" stroke="#222222" stroke-width="0.2">Desktop</text>
<text transform="translate(266.88,13) scale(0.8800,1)" font-size="8.3" fill="#222222" stroke="#222222" stroke-width="0.2">\</text>
<text transform="translate(270.60,13) scale(0.8584,1)" font-size="8.3" fill="#222222" stroke="#222222" stroke-width="0.2">SharpCap</text>
<text transform="translate(306.00,13) scale(0.8801,1)" font-size="8.3" fill="#222222" stroke="#222222" stroke-width="0.2">Captures</text>
<text transform="translate(336.33,13) scale(0.8800,1)" font-size="8.3" fill="#222222" stroke="#222222" stroke-width="0.2">\</text>
<text transform="translate(340.30,13) scale(0.8710,1)" font-size="8.3" fill="#222222" stroke="#222222" stroke-width="0.2">2019-04-28</text>
<text transform="translate(378.33,13) scale(0.8800,1)" font-size="8.3" fill="#222222" stroke="#222222" stroke-width="0.2">\</text>
<text transform="translate(382.00,13) scale(0.8695,1)" font-size="8.3" fill="#222222" stroke="#222222" stroke-width="0.2">Capture</text>
<text transform="translate(408.83,13) scale(0.8800,1)" font-size="8.3" fill="#222222" stroke="#222222" stroke-width="0.2">\</text>
<text transform="translate(412.80,13) scale(0.8064,1)" font-size="8.3" fill="#222222" stroke="#222222" stroke-width="0.2">16_23_37_</text>
<text transform="translate(447.30,13) scale(0.8327,1)" font-size="8.3" fill="#222222" stroke="#222222" stroke-width="0.2">Capture</text>
<text transform="translate(473.24,13) scale(0.8800,1)" font-size="8.3" fill="#222222" stroke="#222222" stroke-width="0.2">_</text>
<text transform="translate(477.80,13) scale(0.7759,1)" font-size="8.3" fill="#222222" stroke="#222222" stroke-width="0.2">00001</text>
<text transform="translate(497.40,13) scale(0.9092,1)" font-size="8.3" fill="#222222" stroke="#222222" stroke-width="0.2">.fits</text>
<text transform="translate(511.63,13) scale(0.8800,1)" font-size="8.3" fill="#222222" stroke="#222222" stroke-width="0.2">-</text>
<text transform="translate(516.74,13) scale(0.7400,1)" font-size="8.3" fill="#222222" stroke="#222222" stroke-width="0.2">C:</text>
<text transform="translate(524.08,13) scale(0.8800,1)" font-size="8.3" fill="#222222" stroke="#222222" stroke-width="0.2">\</text>
<text transform="translate(527.80,13) scale(0.7994,1)" font-size="8.3" fill="#222222" stroke="#222222" stroke-width="0.2">Users</text>
<text transform="translate(545.83,13) scale(0.8800,1)" font-size="8.3" fill="#222222" stroke="#222222" stroke-width="0.2">\</text>
<text transform="translate(549.60,13) scale(0.8951,1)" font-size="8.3" fill="#222222" stroke="#222222" stroke-width="0.2">Michel</text>
<text transform="translate(572.43,13) scale(0.8800,1)" font-size="8.3" fill="#222222" stroke="#222222" stroke-width="0.2">\</text>
<text transform="translate(576.30,13) scale(0.8727,1)" font-size="8.3" fill="#222222" stroke="#222222" stroke-width="0.2">Desktop</text>
<text transform="translate(604.43,13) scale(0.8800,1)" font-size="8.3" fill="#222222" stroke="#222222" stroke-width="0.2">\</text>
<text transform="translate(608.20,13) scale(0.8637,1)" font-size="8.3" fill="#222222" stroke="#222222" stroke-width="0.2">SharpCap</text>
<text transform="translate(643.50,13) scale(0.8951,1)" font-size="8.3" fill="#222222" stroke="#222222" stroke-width="0.2">Captures</text>
<text transform="translate(10.60,31) scale(0.8579,1)" font-size="8.3" fill="#0c0c0c" stroke="#0c0c0c" stroke-width="0.2">File</text>
<text transform="translate(35.20,31) scale(0.8953,1)" font-size="8.3" fill="#0c0c0c" stroke="#0c0c0c" stroke-width="0.2">Cameras</text>
<text transform="translate(78.00,31) scale(0.9633,1)" font-size="8.3" fill="#0c0c0c" stroke="#0c0c0c" stroke-width="0.2">Options</text>
<text transform="translate(118.00,31) scale(0.9230,1)" font-size="8.3" fill="#0c0c0c" stroke="#0c0c0c" stroke-width="0.2">Capture</text>
<text transform="translate(158.60,31) scale(0.9365,1)" font-size="8.3" fill="#0c0c0c" stroke="#0c0c0c" stroke-width="0.2">Tools</text>
<text transform="translate(189.20,31) scale(0.9429,1)" font-size="8.3" fill="#0c0c0c" stroke="#0c0c0c" stroke-width="0.2">Scripting</text>
<text transform="translate(233.00,31) scale(0.9169,1)" font-size="8.3" fill="#0c0c0c" stroke="#0c0c0c" stroke-width="0.2">Help</text>
<text transform="translate(14.60,47) scale(0.9129,1)" font-size="8.3" fill="#0c0c0c" stroke="#0c0c0c" stroke-width="0.2">Start Capture</text>
<text transform="translate(77.60,47) scale(0.9435,1)" font-size="8.3" fill="#0c0c0c" stroke="#0c0c0c" stroke-width="0.2">Quick Capture</text>
<text transform="translate(153.60,47) scale(0.9213,1)" font-size="8.3" fill="#8c8c8c" stroke="#8c8c8c" stroke-width="0.2">Stop Capture</text>
<text transform="translate(217.40,47) scale(0.8281,1)" font-size="8.3" fill="#8c8c8c" stroke="#8c8c8c" stroke-width="0.2">Pause</text>
<text transform="translate(255.20,47) scale(0.9006,1)" font-size="8.3" fill="#0c0c0c" stroke="#0c0c0c" stroke-width="0.2">Snapshot</text>
<text transform="translate(305.60,47) scale(0.8638,1)" font-size="8.3" fill="#0c0c0c" stroke="#0c0c0c" stroke-width="0.2">Live Stack</text>
<text transform="translate(346.00,47) scale(0.9266,1)" font-size="8.3" fill="#0c0c0c" stroke="#0c0c0c" stroke-width="0.2">Target Name :</text>
<text transform="translate(479.60,47) scale(0.8586,1)" font-size="8.3" fill="#0c0c0c" stroke="#0c0c0c" stroke-width="0.2">FX :</text>
<text transform="translate(499.00,47) scale(0.9100,1)" font-size="8.3" fill="#0c0c0c" stroke="#0c0c0c" stroke-width="0.2">None</text>
<text transform="translate(617.00,47) scale(0.9910,1)" font-size="8.3" fill="#0c0c0c" stroke="#0c0c0c" stroke-width="0.2">Zoom:</text>
<text transform="translate(645.60,47) scale(0.9396,1)" font-size="8.3" fill="#0c0c0c" stroke="#0c0c0c" stroke-width="0.2">Auto</text>
<text transform="translate(616.80,77) scale(0.8122,1)" font-size="8.59" fill="#111" font-weight="700" stroke="#111" stroke-width="0.3">Capture Profiles</text>
<text transform="translate(601.40,146) scale(0.8622,1)" font-size="8.29" fill="#1a1a1a" stroke="#1a1a1a" stroke-width="0.15">Colour Space</text>
<text transform="translate(601.40,166) scale(0.8565,1)" font-size="8.29" fill="#1a1a1a" stroke="#1a1a1a" stroke-width="0.15">Binning</text>
<text transform="translate(660.00,165) scale(0.8439,1)" font-size="8.29" fill="#1a1a1a" stroke="#1a1a1a" stroke-width="0.15">1x1</text>
<text transform="translate(601.40,186) scale(0.8580,1)" font-size="8.29" fill="#1a1a1a" stroke="#1a1a1a" stroke-width="0.15">Capture Area</text>
<text transform="translate(660.00,185) scale(0.8700,1)" font-size="8.29" fill="#1a1a1a" stroke="#1a1a1a" stroke-width="0.15">5440x3648</text>
<text transform="translate(616.80,225) scale(0.8162,1)" font-size="8.59" fill="#111" font-weight="700" stroke="#111" stroke-width="0.3">Camera Controls</text>
<text transform="translate(604.60,245) scale(0.8593,1)" font-size="8.29" fill="#1a1a1a" stroke="#1a1a1a" stroke-width="0.15">Exposure</text>
<text transform="translate(601.40,309) scale(0.8626,1)" font-size="8.29" fill="#1a1a1a" stroke="#1a1a1a" stroke-width="0.15">Analogue Gain</text>
<text transform="translate(660.00,329) scale(0.8725,1)" font-size="8.29" fill="#1a1a1a" stroke="#1a1a1a" stroke-width="0.15">Maximum</text>
<text transform="translate(601.40,350) scale(0.8755,1)" font-size="8.29" fill="#1a1a1a" stroke="#1a1a1a" stroke-width="0.15">Auto Exp Target</text>
<text transform="translate(601.40,392) scale(0.8516,1)" font-size="8.29" fill="#1a1a1a" stroke="#1a1a1a" stroke-width="0.15">Black Level</text>
<text transform="translate(616.80,413) scale(0.8029,1)" font-size="8.59" fill="#111" font-weight="700" stroke="#111" stroke-width="0.3">Thermal Controls</text>
<text transform="translate(601.40,431) scale(0.8745,1)" font-size="8.29" fill="#1a1a1a" stroke="#1a1a1a" stroke-width="0.15">Temperature</text>
<text transform="translate(660.00,451) scale(0.8216,1)" font-size="8.29" fill="#1a1a1a" stroke="#1a1a1a" stroke-width="0.15">On</text>
<text transform="translate(976.60,472) scale(0.8511,1)" font-size="8.29" fill="#1a1a1a" stroke="#1a1a1a" stroke-width="0.15">-15,0</text>
<text transform="translate(601.40,492) scale(0.8361,1)" font-size="8.29" fill="#1a1a1a" stroke="#1a1a1a" stroke-width="0.15">Cooler</text>
<text transform="translate(660.00,491) scale(0.8216,1)" font-size="8.29" fill="#1a1a1a" stroke="#1a1a1a" stroke-width="0.15">On</text>
<text transform="translate(616.80,512) scale(0.8074,1)" font-size="8.59" fill="#111" font-weight="700" stroke="#111" stroke-width="0.3">Image Controls</text>
<text transform="translate(659.47,529) scale(0.8800,1)" font-size="8.29" fill="#1a1a1a" stroke="#1a1a1a" stroke-width="0.15">O</text>
<text transform="translate(665.78,529) scale(0.8800,1)" font-size="8.29" fill="#1a1a1a" stroke="#1a1a1a" stroke-width="0.15">f</text>
<text transform="translate(668.18,529) scale(0.8800,1)" font-size="8.29" fill="#1a1a1a" stroke="#1a1a1a" stroke-width="0.15">f</text>
<text transform="translate(3.80,652) scale(0.9032,1)" font-size="8.3" fill="#0c0c0c" stroke="#0c0c0c" stroke-width="0.2">Previewing</text>
<text transform="translate(43.27,652) scale(0.8800,1)" font-size="8.3" fill="#0c0c0c" stroke="#0c0c0c" stroke-width="0.2">:</text>
<text transform="translate(48.39,652) scale(0.7400,1)" font-size="8.3" fill="#0c0c0c" stroke="#0c0c0c" stroke-width="0.2">15</text>
<text transform="translate(57.80,652) scale(0.9005,1)" font-size="8.3" fill="#0c0c0c" stroke="#0c0c0c" stroke-width="0.2">frames</text>
<text transform="translate(83.20,652) scale(0.9404,1)" font-size="8.3" fill="#0c0c0c" stroke="#0c0c0c" stroke-width="0.2">(0</text>
<text transform="translate(92.60,652) scale(0.9029,1)" font-size="8.3" fill="#0c0c0c" stroke="#0c0c0c" stroke-width="0.2">dropped)</text>
<text transform="translate(126.20,652) scale(0.7745,1)" font-size="8.3" fill="#0c0c0c" stroke="#0c0c0c" stroke-width="0.2">in</text>
<text transform="translate(134.80,652) scale(0.8086,1)" font-size="8.3" fill="#0c0c0c" stroke="#0c0c0c" stroke-width="0.2">0:25:47,</text>
<text transform="translate(162.40,652) scale(0.8489,1)" font-size="8.3" fill="#0c0c0c" stroke="#0c0c0c" stroke-width="0.2">exposure</text>
<text transform="translate(194.80,652) scale(0.8561,1)" font-size="8.3" fill="#0c0c0c" stroke="#0c0c0c" stroke-width="0.2">300,0s</text>
<text transform="translate(218.12,652) scale(0.8800,1)" font-size="8.3" fill="#0c0c0c" stroke="#0c0c0c" stroke-width="0.2">,</text>
<text transform="translate(222.20,652) scale(0.8673,1)" font-size="8.3" fill="#0c0c0c" stroke="#0c0c0c" stroke-width="0.2">last</text>
<text transform="translate(237.10,652) scale(0.8567,1)" font-size="8.3" fill="#0c0c0c" stroke="#0c0c0c" stroke-width="0.2">frame</text>
<text transform="translate(258.70,652) scale(0.8158,1)" font-size="8.3" fill="#0c0c0c" stroke="#0c0c0c" stroke-width="0.2">300,2s</text>
<text transform="translate(287.00,652) scale(0.9542,1)" font-size="8.3" fill="#0c0c0c" stroke="#0c0c0c" stroke-width="0.2">Memory:</text>
<text transform="translate(319.45,652) scale(0.8800,1)" font-size="8.3" fill="#0c0c0c" stroke="#0c0c0c" stroke-width="0.2">1</text>
<text transform="translate(326.20,652) scale(0.8274,1)" font-size="8.3" fill="#0c0c0c" stroke="#0c0c0c" stroke-width="0.2">of</text>
<text transform="translate(335.70,652) scale(0.7905,1)" font-size="8.3" fill="#0c0c0c" stroke="#0c0c0c" stroke-width="0.2">27</text>
<text transform="translate(346.10,652) scale(0.8886,1)" font-size="8.3" fill="#0c0c0c" stroke="#0c0c0c" stroke-width="0.2">frames</text>
<text transform="translate(371.70,652) scale(0.7599,1)" font-size="8.3" fill="#0c0c0c" stroke="#0c0c0c" stroke-width="0.2">in</text>
<text transform="translate(380.10,652) scale(0.8194,1)" font-size="8.3" fill="#0c0c0c" stroke="#0c0c0c" stroke-width="0.2">use.</text>
<text transform="translate(418.80,652) scale(0.9266,1)" font-size="8.3" fill="#0c0c0c" stroke="#0c0c0c" stroke-width="0.2">Cooler:</text>
<text transform="translate(446.50,652) scale(0.8062,1)" font-size="8.3" fill="#0c0c0c" stroke="#0c0c0c" stroke-width="0.2">57%,</text>
<text transform="translate(464.40,652) scale(0.8126,1)" font-size="8.3" fill="#0c0c0c" stroke="#0c0c0c" stroke-width="0.2">Temp</text>
<text transform="translate(484.40,652) scale(0.9218,1)" font-size="8.3" fill="#0c0c0c" stroke="#0c0c0c" stroke-width="0.2">-15,0C,</text>
<text transform="translate(512.10,652) scale(0.8883,1)" font-size="8.3" fill="#0c0c0c" stroke="#0c0c0c" stroke-width="0.2">Target</text>
<text transform="translate(536.40,652) scale(0.8671,1)" font-size="8.3" fill="#0c0c0c" stroke="#0c0c0c" stroke-width="0.2">-15,0C</text>
<text transform="translate(854.00,652) scale(0.8856,1)" font-size="8.3" fill="#0c0c0c" stroke="#0c0c0c" stroke-width="0.2">Frame:</text>
<text transform="translate(949.60,652) scale(0.8685,1)" font-size="8.3" fill="#0c0c0c" stroke="#0c0c0c" stroke-width="0.2">02:19/02:41</text>
</svg>
<svg class="a txt half" style="left:0;top:0" width="1000" height="657" font-family="Liberation Sans, sans-serif" font-variant-ligatures="none">
<text transform="translate(601.20,61) scale(0.9265,1)" font-size="8.3" fill="#1e2a3a" stroke="#1e2a3a" stroke-width="0.2">Camera Control Panel</text>
<text transform="translate(641.80,110) scale(0.8397,1)" font-size="8.29" fill="#8e8e8e" stroke="#8e8e8e" stroke-width="0.15">Load</text>
<text transform="translate(740.60,110) scale(0.8822,1)" font-size="8.29" fill="#8e8e8e" stroke="#8e8e8e" stroke-width="0.15">Save</text>
<text transform="translate(831.60,110) scale(0.8760,1)" font-size="8.29" fill="#1a1a1a" stroke="#1a1a1a" stroke-width="0.15">Save As...</text>
<text transform="translate(931.00,110) scale(0.8760,1)" font-size="8.29" fill="#1a1a1a" stroke="#1a1a1a" stroke-width="0.15">Manage...</text>
<text transform="translate(616.80,128) scale(0.8199,1)" font-size="8.59" fill="#111" font-weight="700" stroke="#111" stroke-width="0.3">Capture Format and Area</text>
<text transform="translate(660.00,145) scale(0.8596,1)" font-size="8.29" fill="#1a1a1a" stroke="#1a1a1a" stroke-width="0.15">MONO12</text>
<text transform="translate(601.40,205) scale(0.8616,1)" font-size="8.29" fill="#1a1a1a" stroke="#1a1a1a" stroke-width="0.15">Output Format</text>
<text transform="translate(660.00,204) scale(0.8692,1)" font-size="8.29" fill="#1a1a1a" stroke="#1a1a1a" stroke-width="0.15">FITS files (*.fits)</text>
<text transform="translate(980.00,205) scale(0.8262,1)" font-size="8.29" fill="#1a1a1a" stroke="#1a1a1a" stroke-width="0.15">Auto</text>
<text transform="translate(644.00,245) scale(0.8450,1)" font-size="8.29" fill="#1a1a1a" stroke="#1a1a1a" stroke-width="0.15">300 s</text>
<text transform="translate(964.00,244) scale(0.8229,1)" font-size="8.29" fill="#1a1a1a" stroke="#1a1a1a" stroke-width="0.15">LX Mode</text>
<text transform="translate(604.60,286) scale(0.8675,1)" font-size="8.29" fill="#1a1a1a" stroke="#1a1a1a" stroke-width="0.15">Quick Picks</text>
<text transform="translate(653.20,285) scale(0.8444,1)" font-size="8.29" fill="#1a1a1a" stroke="#1a1a1a" stroke-width="0.15">5m</text>
<text transform="translate(980.60,286) scale(0.8262,1)" font-size="8.29" fill="#1a1a1a" stroke="#1a1a1a" stroke-width="0.15">Auto</text>
<text transform="translate(976.60,309) scale(0.8444,1)" font-size="8.29" fill="#1a1a1a" stroke="#1a1a1a" stroke-width="0.15">400</text>
<text transform="translate(601.40,325) scale(0.8523,1)" font-size="8.29" fill="#1a1a1a" stroke="#1a1a1a" stroke-width="0.15">Frame Rate</text>
<text transform="translate(601.40,333) scale(0.8469,1)" font-size="8.29" fill="#1a1a1a" stroke="#1a1a1a" stroke-width="0.15">Limit</text>
<text transform="translate(976.60,350) scale(0.8444,1)" font-size="8.29" fill="#1a1a1a" stroke="#1a1a1a" stroke-width="0.15">120</text>
<text transform="translate(601.40,371) scale(0.8473,1)" font-size="8.29" fill="#1a1a1a" stroke="#1a1a1a" stroke-width="0.15">USB Speed</text>
<text transform="translate(976.60,371) scale(0.8800,1)" font-size="8.29" fill="#1a1a1a" stroke="#1a1a1a" stroke-width="0.15">3</text>
<text transform="translate(976.60,392) scale(0.8444,1)" font-size="8.29" fill="#1a1a1a" stroke="#1a1a1a" stroke-width="0.15">200</text>
<text transform="translate(976.60,431) scale(0.8511,1)" font-size="8.29" fill="#a4a4a4" stroke="#a4a4a4" stroke-width="0.15">-15,0</text>
<text transform="translate(601.40,451) scale(0.8183,1)" font-size="8.29" fill="#1a1a1a" stroke="#1a1a1a" stroke-width="0.15">Fan</text>
<text transform="translate(601.40,467) scale(0.8687,1)" font-size="8.29" fill="#1a1a1a" stroke="#1a1a1a" stroke-width="0.15">Target</text>
<text transform="translate(601.40,475) scale(0.8745,1)" font-size="8.29" fill="#1a1a1a" stroke="#1a1a1a" stroke-width="0.15">Temperature</text>
<text transform="translate(601.40,525) scale(0.8577,1)" font-size="8.29" fill="#1a1a1a" stroke="#1a1a1a" stroke-width="0.15">Timestamp</text>
<text transform="translate(601.40,533) scale(0.8666,1)" font-size="8.29" fill="#1a1a1a" stroke="#1a1a1a" stroke-width="0.15">Frames</text>
<text transform="translate(616.80,549) scale(0.8053,1)" font-size="8.59" fill="#111" font-weight="700" stroke="#111" stroke-width="0.3">Preprocessing</text>
<text transform="translate(616.80,567) scale(0.8092,1)" font-size="8.59" fill="#111" font-weight="700" stroke="#111" stroke-width="0.3">Display Histogram Stretch</text>
</svg>
</body>
</html>
